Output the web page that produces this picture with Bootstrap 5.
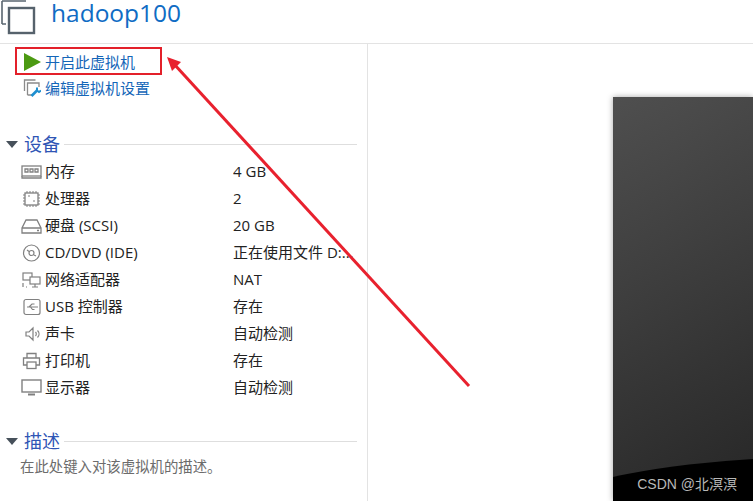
<!DOCTYPE html>
<html lang="zh-CN">

<head>
    <meta charset="UTF-8" />
    <meta name="viewport" content="width=device-width, initial-scale=1.0">
    <title>hadoop100</title>
    <link href="https://cdn.jsdelivr.net/npm/bootstrap@5.3.0/dist/css/bootstrap.min.css" rel="stylesheet">
    <style>
        html, body { height: 100%; }
        body {
            overflow: hidden;
            background: #fff;
            color: #222;
            font-family: "Open Sans", "Noto Sans CJK SC", sans-serif;
            font-size: 15px;
        }
        .vm-shell { width: 753px; height: 501px; position: relative; overflow: hidden; }
        .vm-head { height: 44px; border-bottom: 1px solid #e3e3e3; padding-left: 51px; }
        .vm-logo { position: absolute; left: 0; top: 0; }
        .vm-title { font-size: 24.5px; line-height: 26px; color: #0f6cc4; margin: 0; }
        .vm-body { height: 457px; }
        .vm-side { width: 368px; border-right: 1px solid #e3e3e3; padding: 3px 0 0 0; flex: none; }
        .vm-action { height: 28px; margin-left: 15px; width: 147px; border: 2px solid #e3202a; padding: 2px 0 0 7px; color: #1466b8; line-height: 1; gap: 4px; }
        .vm-action2 { height: 26px; padding-left: 23px; color: #1466b8; gap: 4px; }
        .vm-section { height: 20px; color: #2f55b5; font-size: 18px; padding-left: 6px; }
        .vm-section span { margin: 0 4px 0 6px; }
        .vm-tri { width: 0; height: 0; border: 6px solid transparent; border-top: 7px solid #46505a; border-bottom: 0; }
        .vm-rule { flex: 1; height: 1px; background: #dedede; margin-right: 10px; }
        .vm-list { margin-top: 4px; }
        .vm-row { height: 27px; }
        .vm-name { width: 233px; flex: none; padding-left: 21px; gap: 3px; white-space: nowrap; }
        .vm-name svg { flex: none; }
        .vm-val { white-space: nowrap; overflow: hidden; width: 122px; }
        .vm-desc { color: #6c6c6c; font-size: 14.4px; padding-left: 20px; margin-top: 5px; }
        .vm-main { flex: 1; padding: 53px 0 0 245px; }
        .vm-screen {
            height: 404px;
            position: relative;
            overflow: hidden;
            background: linear-gradient(150deg, #4f4f4f 0%, #3f3f3f 40%, #262626 100%);
            box-shadow: 0 0 6px rgba(0, 0, 0, .35);
        }
        .vm-glow {
            position: absolute;
            left: -140px;
            top: 360px;
            width: 700px;
            height: 200px;
            border-radius: 50%;
            background: #000;
        }
        .vm-mark { position: absolute; right: 16px; bottom: 6px; color: #b8b8b8; font-size: 14px; font-family: "Liberation Sans", "Noto Sans CJK SC", sans-serif; }
        .vm-arrow { position: absolute; left: 0; top: 0; pointer-events: none; }
    </style>
</head>

<body>
    <div class="vm-shell">
        <svg class="vm-logo" width="40" height="36" viewBox="0 0 40 36" fill="none">
            <path d="M2 24V1M2 24h4M2 1h24" stroke="#5a6670" stroke-width="1.6" />
            <rect x="9" y="8" width="25" height="25" stroke="#56626c" stroke-width="2.4" />
        </svg>
        <div class="vm-head d-flex align-items-start">
            <h1 class="vm-title">hadoop100</h1>
        </div>
        <div class="vm-body d-flex">
            <div class="vm-side">
                <div class="vm-action d-flex align-items-center">
                    <svg width="17" height="18" viewBox="0 0 17 18"><path d="M0 0l17 9L0 18z" fill="#4c9a12" /></svg>
                    <span>开启此虚拟机</span>
                </div>
                <div class="vm-action2 d-flex align-items-center">
                    <svg width="18" height="18" viewBox="0 0 18 18" fill="none">
                        <path d="M1.500 12V1h11M4.500 16V4H16v4M4.500 16H9" stroke="#8a8a8a" stroke-width="1.300" />
                        <path d="M8.500 17l5.500-5.500" stroke="#1e8fd0" stroke-width="2.600" />
                        <path d="M14 8.500v3l2 1.500 2-1.500" stroke="#1e8fd0" stroke-width="2" />
                    </svg>
                    <span>编辑虚拟机设置</span>
                </div>

                <div class="vm-section d-flex align-items-center" style="margin-top:33px">
                    <i class="vm-tri"></i><span>设备</span><i class="vm-rule"></i>
                </div>
                <div class="vm-list">
                    <div class="vm-row d-flex align-items-center">
                        <div class="vm-name d-flex align-items-center">
                            <svg width="21" height="16" viewBox="0 0 21 16" fill="none" stroke="#808080" stroke-width="1.300"><rect x="1" y="2" width="19" height="10" /><path d="M1 12v2h19v-2M4 5h3v3H4zM9 5h3v3H9zM14 5h3v3h-3z" /></svg>
                            <span>内存</span>
                        </div>
                        <div class="vm-val">4 GB</div>
                    </div>
                    <div class="vm-row d-flex align-items-center">
                        <div class="vm-name d-flex align-items-center">
                            <svg width="21" height="18" viewBox="0 0 21 18" fill="none" stroke="#808080"><rect x="4" y="3" width="13" height="12" stroke-width="1.300" /><path d="M2 5h2M2 8h2M2 11h2M2 14h2M17 5h2M17 8h2M17 11h2M17 14h2M6 1v2M9 1v2M12 1v2M15 1v2M6 15v2M9 15v2M12 15v2M15 15v2M7 6h2M12 11h2" /></svg>
                            <span>处理器</span>
                        </div>
                        <div class="vm-val">2</div>
                    </div>
                    <div class="vm-row d-flex align-items-center">
                        <div class="vm-name d-flex align-items-center">
                            <svg width="21" height="16" viewBox="0 0 21 16" fill="none" stroke="#808080" stroke-width="1.300"><path d="M5 2h11l4 8v5H1v-5zM1 10h19M16 12.500h2" /></svg>
                            <span>硬盘 (SCSI)</span>
                        </div>
                        <div class="vm-val">20 GB</div>
                    </div>
                    <div class="vm-row d-flex align-items-center">
                        <div class="vm-name d-flex align-items-center">
                            <svg width="21" height="18" viewBox="0 0 21 18" fill="none" stroke="#808080" stroke-width="1.200"><circle cx="10.500" cy="9" r="8" /><circle cx="10.500" cy="9" r="2.500" /><path d="M6 6l2 1.500M13 11l2 1" /></svg>
                            <span>CD/DVD (IDE)</span>
                        </div>
                        <div class="vm-val">正在使用文件 D:...</div>
                    </div>
                    <div class="vm-row d-flex align-items-center">
                        <div class="vm-name d-flex align-items-center">
                            <svg width="21" height="18" viewBox="0 0 21 18" fill="none" stroke="#808080" stroke-width="1.200"><rect x="2" y="2" width="9" height="7" /><rect x="9" y="6" width="10" height="7" fill="#fff" /><path d="M14 13v3M11 16h6M2 12v4M5 16h1" /></svg>
                            <span>网络适配器</span>
                        </div>
                        <div class="vm-val">NAT</div>
                    </div>
                    <div class="vm-row d-flex align-items-center">
                        <div class="vm-name d-flex align-items-center">
                            <svg width="21" height="18" viewBox="0 0 21 18" fill="none" stroke="#808080" stroke-width="1.200"><rect x="3" y="1.500" width="16" height="15" rx="2" /><path d="M6 9h11M8 9l3-3h2.500M9.500 9l2 2.500h2" /></svg>
                            <span>USB 控制器</span>
                        </div>
                        <div class="vm-val">存在</div>
                    </div>
                    <div class="vm-row d-flex align-items-center">
                        <div class="vm-name d-flex align-items-center">
                            <svg width="21" height="16" viewBox="0 0 21 16" fill="none" stroke="#808080" stroke-width="1.200"><path d="M5 6h3l4-4v12l-4-4H5zM14.500 6c1 1 1 3 0 4M16.500 4.500c2 2 2 5 0 7" /></svg>
                            <span>声卡</span>
                        </div>
                        <div class="vm-val">自动检测</div>
                    </div>
                    <div class="vm-row d-flex align-items-center">
                        <div class="vm-name d-flex align-items-center">
                            <svg width="21" height="18" viewBox="0 0 21 18" fill="none" stroke="#808080" stroke-width="1.300"><path d="M6 6V1.500h9V6M6 13H2.500V6h16v7H15" /><rect x="6" y="10" width="9" height="6.500" /></svg>
                            <span>打印机</span>
                        </div>
                        <div class="vm-val">存在</div>
                    </div>
                    <div class="vm-row d-flex align-items-center">
                        <div class="vm-name d-flex align-items-center">
                            <svg width="21" height="17" viewBox="0 0 21 17" fill="none" stroke="#808080" stroke-width="1.400"><rect x="1" y="1" width="19" height="12" /><path d="M7 15.500h7" stroke-width="2" /></svg>
                            <span>显示器</span>
                        </div>
                        <div class="vm-val">自动检测</div>
                    </div>
                </div>

                <div class="vm-section d-flex align-items-center" style="margin-top:30px">
                    <i class="vm-tri"></i><span>描述</span><i class="vm-rule"></i>
                </div>
                <div class="vm-desc">在此处键入对该虚拟机的描述。</div>
            </div>
            <div class="vm-main">
                <div class="vm-screen">
                    <div class="vm-glow"></div>
                    <div class="vm-mark">CSDN @北溟溟</div>
                </div>
            </div>
        </div>
        <svg class="vm-arrow" width="753" height="501" viewBox="0 0 753 501" fill="none">
            <path d="M469 386L174 64" stroke="#e8212e" stroke-width="3" />
            <path d="M167 57l14 5-9 9z" fill="#e8212e" />
        </svg>
    </div>

    <script src="https://cdn.jsdelivr.net/npm/bootstrap@5.3.0/dist/js/bootstrap.bundle.min.js"></script>
</body>

</html>
